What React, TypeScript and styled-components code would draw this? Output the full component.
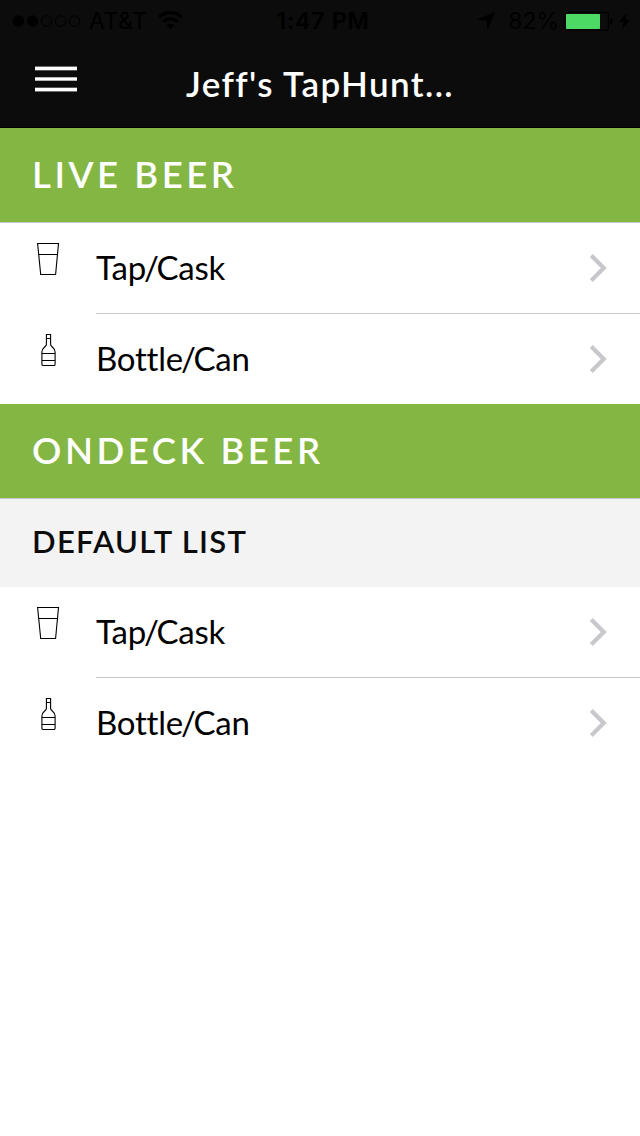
import React from "react";
import styled, { createGlobalStyle } from "styled-components";

const GlobalStyle = createGlobalStyle`
  *, *::before, *::after { box-sizing: border-box; }
  body { margin: 0; background: #fff; font-family: Lato, sans-serif; color: #000; }
  h1, h2, h3, ul { margin: 0; padding: 0; font-weight: inherit; }
  svg { display: block; flex: none; }
`;

const Screen = styled.div`
  width: 640px;
  min-height: 1136px;
  background: #fff;
`;

const Header = styled.header`
  height: 128px;
  background: #0c0c0c;
  border-bottom: 1px solid #000;
`;

const StatusBar = styled.div`
  display: grid;
  grid-template-columns: 210px 1fr 210px;
  height: 40px;
  padding: 0 10px 0 12px;
  font-family: Inter, sans-serif;
  font-size: 23px;
  line-height: 40px;
  color: #000;
  white-space: nowrap;
`;

const StatusGroup = styled.div<{ $align: string }>`
  display: flex;
  align-items: center;
  justify-content: ${(p) => p.$align};
`;

const StatusText = styled.span`
  padding-top: 1px;
`;

const Time = styled(StatusText)`
  padding-left: 4px;
  font-weight: 600;
  letter-spacing: 0.8px;
`;

const Carrier = styled(StatusText)`
  margin: 0 11px 0 8px;
  letter-spacing: 0.5px;
`;

const Percent = styled(StatusText)`
  margin: 0 5px 0 13px;
`;

const NavBar = styled.div`
  display: grid;
  grid-template-columns: 100px 1fr 100px;
  height: 87px;
`;

const MenuButton = styled.button`
  display: flex;
  align-items: flex-start;
  padding: 26px 0 0 35px;
  border: 0;
  background: none;
`;

const Title = styled.h1`
  text-align: center;
  font-size: 35px;
  font-weight: 600;
  letter-spacing: 1.4px;
  line-height: 86px;
  color: #fff;
`;

const SectionHeader = styled.h2`
  height: 95px;
  padding-left: 32px;
  background: #84b643;
  border-bottom: 1px solid #c8c7cc;
  font-size: 36.5px;
  font-weight: 600;
  line-height: 93px;
  letter-spacing: 3.55px;
  color: #fff;
`;

const ListHeader = styled.h3`
  height: 88px;
  padding-left: 32px;
  background: #f3f3f3;
  font-size: 31px;
  font-weight: 600;
  line-height: 84px;
  letter-spacing: 1.3px;
  color: #0c0c0c;
`;

const List = styled.ul`
  list-style: none;
`;

const Row = styled.li`
  display: flex;
  padding-left: 32px;
`;

const IconCell = styled.div`
  width: 64px;
  padding-top: 18px;
`;

const RowBody = styled.div`
  flex: 1;
  display: flex;
  align-items: center;
  justify-content: space-between;
  height: 90px;
  padding-right: 32px;

  ${Row}:not(:last-child) & {
    height: 91px;
    border-bottom: 1px solid #c8c7cc;
  }
`;

const Label = styled.span`
  padding-bottom: 2px;
  font-size: 33px;
  line-height: 88px;
  letter-spacing: -0.25px;
  font-variant-ligatures: none;
`;

const Slash = styled.span`
  margin: 0 -2px;
`;

const SignalDots = () => (
  <svg width="69" height="12" viewBox="0 0 69 12" stroke="#000">
    {[0, 1, 2, 3, 4].map((i) => (
      <circle key={i} cx={6.5 + i * 14} cy="6" r="5.2" fill={i < 2 ? "#000" : "none"} />
    ))}
  </svg>
);

const Wifi = () => (
  <svg width="25" height="19" viewBox="0 0 25 19" fill="none" stroke="#000" strokeWidth="3.2">
    <path d="M1.2 6.2a16 16 0 0 1 22.6 0" />
    <path d="M5.2 10.9a10.3 10.3 0 0 1 14.6 0" />
    <path d="M12.5 18.5 8.5 14.5a5.7 5.7 0 0 1 8 0z" fill="#000" stroke="none" />
  </svg>
);

const Location = () => (
  <svg width="18" height="18" viewBox="0 0 18 18">
    <path d="M18 0 10.5 18 9.5 8.5 0 7.5z" fill="#000" />
  </svg>
);

const Battery = () => (
  <svg width="50" height="20" viewBox="0 0 50 20">
    <rect x="1.2" y="1.4" width="43.2" height="18" rx="2.5" fill="none" stroke="#000" strokeWidth="1.2" />
    <rect x="2" y="3" width="34" height="15" rx="0.8" fill="#4cd964" />
    <path d="M46 7c4 1 4 6 0 7z" fill="#000" />
  </svg>
);

const BoltShape = styled.svg`
  margin-left: 5px;
`;

const Bolt = () => (
  <BoltShape width="11" height="18" viewBox="0 0 12 18">
    <path d="M8.5 0 0 10h5L3.5 18 12 7.5H7z" fill="#000" />
  </BoltShape>
);

const MenuIcon = () => (
  <svg width="42" height="27" viewBox="0 0 42 27" fill="#fff">
    <rect y="0.6" width="42" height="3.7" />
    <rect y="11.3" width="42" height="3.4" />
    <rect y="21.7" width="42" height="3.7" />
  </svg>
);

const Glass = () => (
  <svg width="32" height="36" viewBox="0 0 32 36" fill="none" stroke="#000" strokeWidth="1.1">
    <path d="M5.6 2.5H26.5L23.6 33.5H8.7ZM6.8 13.5H25.4" />
  </svg>
);

const Bottle = () => (
  <svg width="32" height="36" viewBox="0 0 32 36" fill="none" stroke="#000" strokeWidth="1.1">
    <path d="M14.4 2.5H18.6V12.6C19.2 15.5 23.1 15.5 23.1 20V32.2Q23.1 33.5 21.8 33.5H11.2Q9.9 33.5 9.9 32.2V20C9.9 15.5 13.8 15.5 14.4 12.6ZM14.4 6.5H18.6M9.9 21.5H23.1M9.9 28.5H23.1" />
  </svg>
);

const Chevron = () => (
  <svg width="20" height="30" viewBox="0 0 20 30" fill="none" stroke="#c7c7cc" strokeWidth="4.2">
    <path d="M3.3 2.5 15.8 15 3.3 27.5" />
  </svg>
);

const BeerList = () => (
  <List>
    <Row>
      <IconCell><Glass /></IconCell>
      <RowBody><Label>Tap<Slash>/</Slash>Cask</Label><Chevron /></RowBody>
    </Row>
    <Row>
      <IconCell><Bottle /></IconCell>
      <RowBody><Label>Bottle<Slash>/</Slash>Can</Label><Chevron /></RowBody>
    </Row>
  </List>
);

export default function App() {
  return (
    <Screen>
      <GlobalStyle />
      <Header>
        <StatusBar>
          <StatusGroup $align="flex-start"><SignalDots /><Carrier>AT&amp;T</Carrier><Wifi /></StatusGroup>
          <StatusGroup $align="center"><Time>1:47 PM</Time></StatusGroup>
          <StatusGroup $align="flex-end"><Location /><Percent>82%</Percent><Battery /><Bolt /></StatusGroup>
        </StatusBar>
        <NavBar>
          <MenuButton aria-label="Menu"><MenuIcon /></MenuButton>
          <Title>Jeff's TapHunt...</Title>
        </NavBar>
      </Header>
      <main>
        <SectionHeader>LIVE BEER</SectionHeader>
        <BeerList />
        <SectionHeader>ONDECK BEER</SectionHeader>
        <ListHeader>DEFAULT LIST</ListHeader>
        <BeerList />
      </main>
    </Screen>
  );
}
